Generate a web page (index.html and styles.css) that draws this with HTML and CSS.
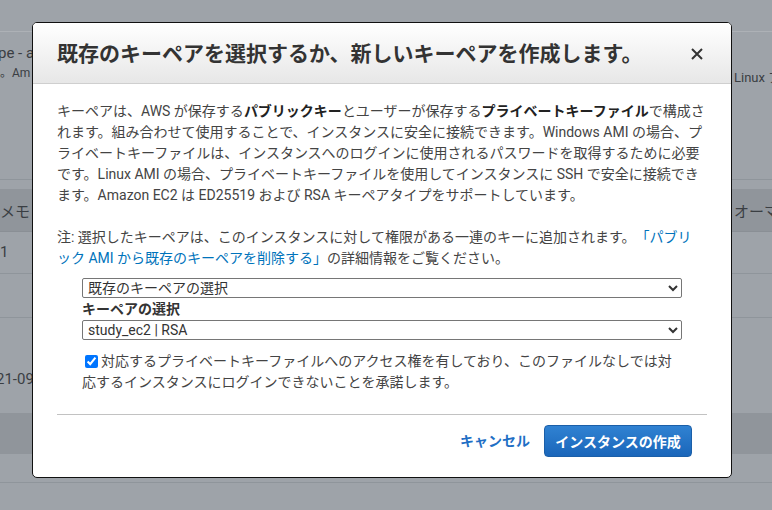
FILE: index.html
```html
<!DOCTYPE html>
<html lang="ja">
<head>
<meta charset="utf-8">
<title>キーペア</title>
<link rel="stylesheet" href="styles.css">
</head>
<body>
<div class="page">
  <div class="bg-top"></div>
  <div class="bg-info">
    <div class="bg-l1">pe - a</div>
    <div class="bg-l2"><span>。Am</span><span class="bg-right">Linux ア</span></div>
  </div>
  <div class="bg-head"><span>メモ</span><span class="bg-right">オーマ</span></div>
  <div class="bg-row r1"><span>1</span></div>
  <div class="bg-row r2"></div>
  <div class="bg-row r3"><span>21-09-</span></div>
  <div class="bg-band"></div>
  <div class="bg-row r4"></div>
</div>

<div class="modal">
  <div class="modal-header">
    <h2 class="modal-title">既存のキーペアを選択するか、新しいキーペアを作成します。</h2>
    <svg class="close" width="12" height="12" viewBox="0 0 12 12"><path d="M1 1L11 11M11 1L1 11" stroke="#333" stroke-width="2" fill="none"/></svg>
  </div>
  <div class="modal-body">
    <p class="para">キーペアは、AWS が保存する<b>パブリックキー</b>とユーザーが保存する<b>プライベートキーファイル</b>で構成されます。組み合わせて使用することで、インスタンスに安全に接続できます。Windows AMI の場合、プライベートキーファイルは、インスタンスへのログインに使用されるパスワードを取得するために必要です。Linux AMI の場合、プライベートキーファイルを使用してインスタンスに SSH で安全に接続できます。Amazon EC2 は ED25519 および RSA キーペアタイプをサポートしています。</p>
    <p class="para note">注: 選択したキーペアは、このインスタンスに対して権限がある一連のキーに追加されます。<a class="link">「パブリ<br>ック AMI から既存のキーペアを削除する」</a>の詳細情報をご覧ください。</p>
    <div class="form">
      <select class="sel"><option>既存のキーペアの選択</option></select>
      <div class="field-label">キーペアの選択</div>
      <select class="sel"><option>study_ec2 | RSA</option></select>
      <label class="ack"><input type="checkbox" checked class="cb">対応するプライベートキーファイルへのアクセス権を有しており、このファイルなしでは対応するインスタンスにログインできないことを承諾します。</label>
    </div>
    <div class="modal-footer">
      <a class="cancel">キャンセル</a>
      <button class="primary">インスタンスの作成</button>
    </div>
  </div>
</div>
</body>
</html>
```

FILE: styles.css
```css
html, body {
  margin: 0;
  padding: 0;
}
body {
  width: 772px;
  height: 510px;
  overflow: hidden;
  background: #9ea3a9;
  font-family: Roboto, "Noto Sans CJK JP", sans-serif;
  color: #3a3e43;
  position: relative;
  text-spacing-trim: space-all;
}
.page {
  width: 772px;
}
.bg-top {
  height: 31px;
  border-bottom: 1px solid #adb1b6;
}
.bg-info {
  padding-top: 10px;
  box-sizing: border-box;
  height: 148px;
  border-bottom: 1px solid #8f959b;
  margin-bottom: 9px;
}
.bg-l1 {
  font-size: 15px;
  line-height: 22px;
  margin-left: -2px;
}
.bg-l2 {
  display: grid;
  grid-template-columns: 734px 1fr;
  font-size: 12px;
  line-height: 18px;
  white-space: nowrap;
}
.bg-l2 .bg-right {
  margin-top: 5px;
  font-size: 13px;
}
.bg-head {
  background: #90959b;
  display: grid;
  grid-template-columns: 734px 1fr;
  align-items: center;
  font-size: 15px;
  white-space: nowrap;
  border-bottom: 1px solid #8a8f95;
  box-sizing: border-box;
  height: 43px;
}
.bg-row {
  border-bottom: 1px solid #8f959b;
  font-size: 15px;
  box-sizing: border-box;
}
.r1 { height: 42px; line-height: 40px; }
.r2 { height: 44px; }
.r3 { height: 95px; padding-top: 51px; line-height: 20px; margin-left: -4px; border-bottom: none; }
.bg-band {
  height: 41px;
  background: #90959b;
}
.r4 { height: 29px; }

.modal {
  position: absolute;
  left: 32px;
  top: 22px;
  width: 700px;
  box-sizing: border-box;
  background: #fff;
  border: 1px solid #111;
  border-radius: 5px;
  overflow: hidden;
}
.modal-header {
  height: 61px;
  box-sizing: border-box;
  background: linear-gradient(#ffffff, #e7e7e7);
  border-bottom: 1px solid #cfcfcf;
  display: flex;
  align-items: center;
  justify-content: space-between;
  padding: 2px 28px 0 24px;
}
.modal-title {
  margin: 0;
  font-size: 21px;
  font-weight: bold;
  color: #333;
  line-height: 28px;
  white-space: nowrap;
}
.close {
  display: block;
}
.modal-body {
  padding: 17px 24px 20px;
  font-size: 14px;
  line-height: 21px;
  color: #444;
}
.para {
  margin: 0;
}
.para b {
  color: #222;
}
.note {
  margin-top: 21px;
}
.link {
  color: #0073bb;
}
.form {
  margin: 9px 25px 0;
}
.sel {
  display: block;
  width: 600px;
  height: 20px;
  box-sizing: border-box;
  font-family: Roboto, "Noto Sans CJK JP", sans-serif;
  font-size: 14px;
  color: #333;
  border: 1px solid #767676;
  border-radius: 2px;
  background: #fff;
  padding: 0 0 0 1px;
}
.field-label {
  font-weight: bold;
  color: #333;
  line-height: 22px;
}
.ack {
  display: block;
  margin-top: 11px;
  color: #444;
}
.cb {
  width: 13px;
  height: 13px;
  margin: 0 3px 0 3px;
  vertical-align: -2px;
}
.modal-footer {
  margin-top: 21px;
  border-top: 1px solid #c2c2c2;
  padding: 10px 15px 0 0;
  display: flex;
  justify-content: flex-end;
  align-items: center;
}
.cancel {
  color: #1f6fc5;
  font-weight: bold;
  margin-right: 14px;
}
.primary {
  width: 148px;
  height: 32px;
  border: 1px solid #1b5fa8;
  border-radius: 4px;
  background: linear-gradient(#3082d2, #1a66ba);
  color: #fff;
  font-family: Roboto, "Noto Sans CJK JP", sans-serif;
  font-size: 14px;
  font-weight: bold;
  padding: 0;
}
```
